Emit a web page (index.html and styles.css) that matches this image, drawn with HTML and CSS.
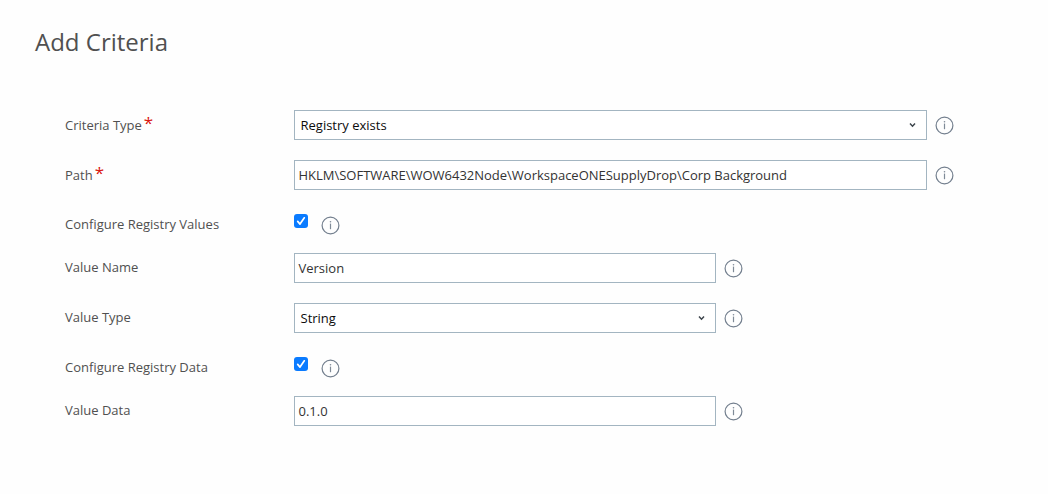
FILE: index.html
```
<!DOCTYPE html>
<html lang="en">
<head>
<meta charset="utf-8">
<title>Add Criteria</title>
<link rel="stylesheet" href="styles.css">
</head>
<body>
<svg width="0" height="0" class="defs">
  <symbol id="info" viewBox="0 0 19 19">
    <circle cx="9.5" cy="9.5" r="8.4" fill="none" stroke="#737f8e" stroke-width="1.2"/>
    <circle cx="9.5" cy="5.7" r=".8" fill="#7f8a97"/>
    <path d="M9.5 7.6v5.6" stroke="#7f8a97" stroke-width="1.2"/>
  </symbol>
  <symbol id="chevron" viewBox="0 0 7 6">
    <path d="M1 1.6 3.5 4.2 6 1.6" fill="none" stroke="#3d454c" stroke-width="1.5"/>
  </symbol>
  <symbol id="check" viewBox="0 0 14 14">
    <path d="M3.7 7.4 6 10.1 10.3 3.8" fill="none" stroke="#fff" stroke-width="1.7" stroke-linecap="round" stroke-linejoin="round"/>
  </symbol>
</svg>
<main class="page">
  <h1 class="title">Add Criteria</h1>
  <form class="form">
    <div class="row">
      <div class="label label-required"><span>Criteria Type</span><span class="required">*</span></div>
      <div class="field field-wide select"><span>Registry exists</span><svg class="chevron"><use href="#chevron"/></svg></div>
      <svg class="info"><use href="#info"/></svg>
    </div>
    <div class="row">
      <div class="label label-required"><span>Path</span><span class="required">*</span></div>
      <div class="field field-wide path"><span>HKLM\SOFTWARE\WOW6432Node\WorkspaceONESupplyDrop\Corp Background</span></div>
      <svg class="info"><use href="#info"/></svg>
    </div>
    <div class="row row-check">
      <div class="label">Configure Registry Values</div>
      <span class="checkbox" role="checkbox" aria-checked="true"><svg class="check"><use href="#check"/></svg></span>
      <svg class="info"><use href="#info"/></svg>
    </div>
    <div class="row">
      <div class="label">Value Name</div>
      <div class="field"><span>Version</span></div>
      <svg class="info"><use href="#info"/></svg>
    </div>
    <div class="row">
      <div class="label">Value Type</div>
      <div class="field select"><span>String</span><svg class="chevron"><use href="#chevron"/></svg></div>
      <svg class="info"><use href="#info"/></svg>
    </div>
    <div class="row row-check">
      <div class="label">Configure Registry Data</div>
      <span class="checkbox" role="checkbox" aria-checked="true"><svg class="check"><use href="#check"/></svg></span>
      <svg class="info"><use href="#info"/></svg>
    </div>
    <div class="row">
      <div class="label">Value Data</div>
      <div class="field"><span>0.1.0</span></div>
      <svg class="info"><use href="#info"/></svg>
    </div>
  </form>
</main>
</body>
</html>
```
FILE: styles.css
```
* { box-sizing: border-box; }
body {
  margin: 0;
  background: #fefefe;
  color: #505050;
  font: 13px/18px "Open Sans", sans-serif;
}
.defs { display: none; }
.page { padding: 25px 35px 0; }
.title {
  margin: 0;
  height: 75px;
  font-size: 24px;
  line-height: 34px;
  font-weight: 400;
}
.form { padding-left: 30px; }
.row {
  display: flex;
  height: 50px;
  padding: 10px 0;
}
.label {
  display: flex;
  width: 229px;
  padding-top: 5px;
  white-space: nowrap;
}
.label-required { padding-top: 6px; }
.required {
  margin-left: 2px;
  color: #d9160f;
  font-size: 17px;
  line-height: 14px;
}
.field {
  display: flex;
  align-items: center;
  justify-content: space-between;
  width: 422px;
  height: 30px;
  padding: 0 10.5px 0 3.5px;
  border: 1px solid #a3b5c1;
  background: #fff;
  color: #333;
  white-space: nowrap;
}
.field-wide { width: 633px; }
.path { letter-spacing: -0.01px; }
.select {
  padding-left: 5.5px;
  color: #0c0c0c;
}
.chevron { width: 7px; height: 6px; }
.info {
  width: 19px;
  height: 19px;
  margin: 6px 0 0 8px;
}
.row-check { height: 43px; }
.checkbox {
  width: 14px;
  height: 14px;
  margin-top: 4px;
  border-radius: 3px;
  background: #0a7bff;
}
.check {
  display: block;
  width: 14px;
  height: 14px;
}
.row-check .info { margin-left: 13px; }
```
